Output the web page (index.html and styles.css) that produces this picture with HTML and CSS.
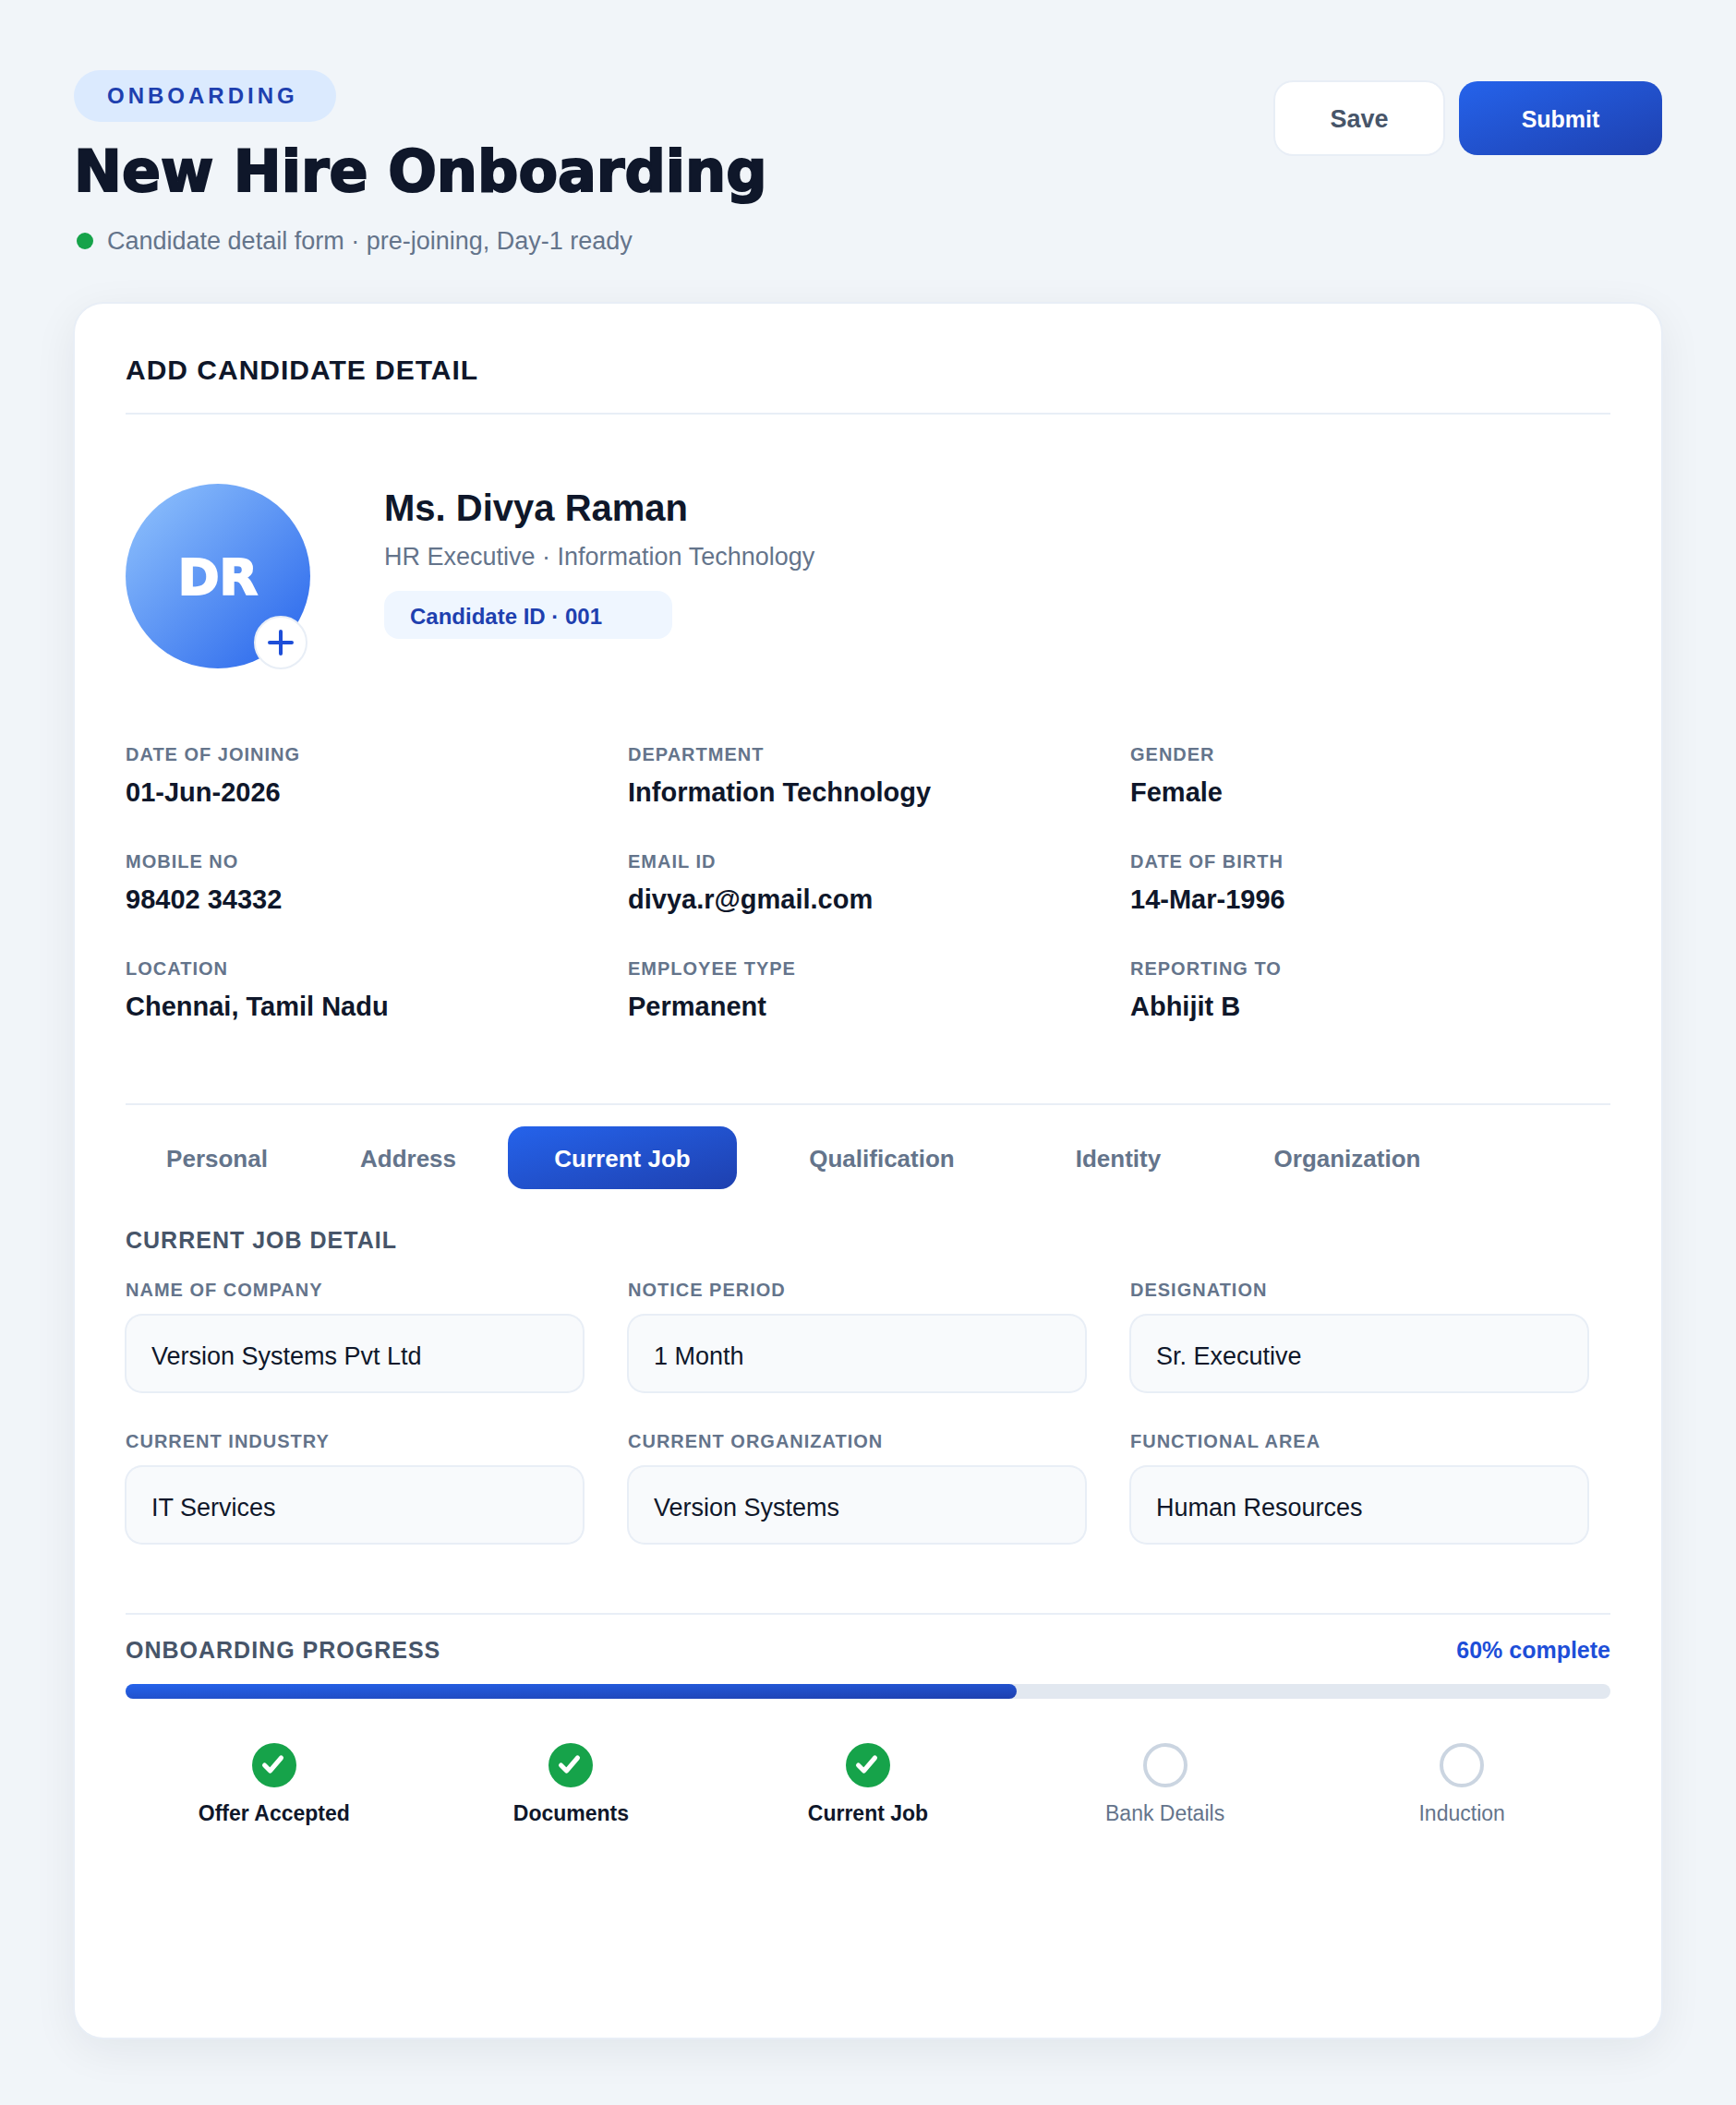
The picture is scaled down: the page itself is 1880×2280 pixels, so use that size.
FILE: index.html
```html
<!DOCTYPE html>
<html lang="en">
<head>
    <meta charset="UTF-8">
    <meta name="viewport" content="width=device-width, initial-scale=1.0">
    <title>New Hire Onboarding</title>
    <link rel="stylesheet" href="styles.css">
</head>
<body>
    <header class="page-header">
        <div>
            <span class="badge">ONBOARDING</span>
            <h1>New Hire Onboarding</h1>
            <p class="subtitle"><span class="dot"></span>Candidate detail form · pre-joining, Day-1 ready</p>
        </div>
        <div class="actions">
            <button type="button" class="btn btn-save">Save</button>
            <button type="submit" form="jobForm" class="btn btn-submit">Submit</button>
        </div>
    </header>

    <main class="card">
        <h2 class="card-title">ADD CANDIDATE DETAIL</h2>

        <section class="profile">
            <div class="avatar">
                DR
                <button type="button" class="avatar-add" aria-label="Add photo">
                    <svg width="32" height="32" viewBox="0 0 32 32">
                        <path d="M16 4v24M4 16h24" stroke="#1d4ed8" stroke-width="4" stroke-linecap="round"/>
                    </svg>
                </button>
            </div>
            <div>
                <h3 class="name">Ms. Divya Raman</h3>
                <p class="role">HR Executive · Information Technology</p>
                <span class="chip">Candidate ID · 001</span>
            </div>
        </section>

        <dl class="details">
            <div><dt>DATE OF JOINING</dt><dd>01-Jun-2026</dd></div>
            <div><dt>DEPARTMENT</dt><dd>Information Technology</dd></div>
            <div><dt>GENDER</dt><dd>Female</dd></div>
            <div><dt>MOBILE NO</dt><dd>98402 34332</dd></div>
            <div><dt>EMAIL ID</dt><dd>divya.r@gmail.com</dd></div>
            <div><dt>DATE OF BIRTH</dt><dd>14-Mar-1996</dd></div>
            <div><dt>LOCATION</dt><dd>Chennai, Tamil Nadu</dd></div>
            <div><dt>EMPLOYEE TYPE</dt><dd>Permanent</dd></div>
            <div><dt>REPORTING TO</dt><dd>Abhijit B</dd></div>
        </dl>

        <nav class="tabs">
            <button type="button" class="tab">Personal</button>
            <button type="button" class="tab">Address</button>
            <button type="button" class="tab tab-md active">Current Job</button>
            <button type="button" class="tab tab-xl">Qualification</button>
            <button type="button" class="tab">Identity</button>
            <button type="button" class="tab tab-lg">Organization</button>
        </nav>

        <form id="jobForm">
            <h3 class="section-title">CURRENT JOB DETAIL</h3>
            <div class="fields">
                <div class="field">
                    <label for="company">NAME OF COMPANY</label>
                    <input type="text" id="company" value="Version Systems Pvt Ltd">
                </div>
                <div class="field">
                    <label for="notice">NOTICE PERIOD</label>
                    <input type="text" id="notice" value="1 Month">
                </div>
                <div class="field">
                    <label for="designation">DESIGNATION</label>
                    <input type="text" id="designation" value="Sr. Executive">
                </div>
                <div class="field">
                    <label for="industry">CURRENT INDUSTRY</label>
                    <input type="text" id="industry" value="IT Services">
                </div>
                <div class="field">
                    <label for="organization">CURRENT ORGANIZATION</label>
                    <input type="text" id="organization" value="Version Systems">
                </div>
                <div class="field">
                    <label for="area">FUNCTIONAL AREA</label>
                    <input type="text" id="area" value="Human Resources">
                </div>
            </div>
        </form>

        <section class="progress">
            <div class="progress-head">
                <h3 class="section-title">ONBOARDING PROGRESS</h3>
                <span class="percent">60% complete</span>
            </div>
            <div class="bar"><div class="bar-fill" style="width: 60%"></div></div>
            <ol class="steps">
                <li class="step done">
                    <svg width="48" height="48" viewBox="0 0 48 48"><circle cx="24" cy="24" r="24" fill="#16a34a"/><path d="M13.5 24l6 6 12-14" class="tick"/></svg>
                    Offer Accepted
                </li>
                <li class="step done">
                    <svg width="48" height="48" viewBox="0 0 48 48"><circle cx="24" cy="24" r="24" fill="#16a34a"/><path d="M13.5 24l6 6 12-14" class="tick"/></svg>
                    Documents
                </li>
                <li class="step done">
                    <svg width="48" height="48" viewBox="0 0 48 48"><circle cx="24" cy="24" r="24" fill="#16a34a"/><path d="M13.5 24l6 6 12-14" class="tick"/></svg>
                    Current Job
                </li>
                <li class="step">
                    <svg width="48" height="48" viewBox="0 0 48 48"><circle cx="24" cy="24" r="22" fill="#fff" stroke="#cbd5e1" stroke-width="4"/></svg>
                    Bank Details
                </li>
                <li class="step">
                    <svg width="48" height="48" viewBox="0 0 48 48"><circle cx="24" cy="24" r="22" fill="#fff" stroke="#cbd5e1" stroke-width="4"/></svg>
                    Induction
                </li>
            </ol>
        </section>
    </main>
</body>
</html>
```
FILE: styles.css
```css
* {
    box-sizing: border-box;
}
body {
    margin: 0;
    padding: 76px 80px 72px;
    font-family: "Liberation Sans", Arial, sans-serif;
    color: #0f172a;
    background: #f1f5f9;
}
h1, h2, h3, p, dl, dd, ol {
    margin: 0;
    padding: 0;
}
button, input {
    font-family: inherit;
}
.page-header {
    display: flex;
    justify-content: space-between;
    align-items: flex-start;
    margin-bottom: 51px;
}
.badge {
    display: block;
    width: fit-content;
    min-width: 284px;
    padding: 0 36px;
    line-height: 56px;
    border-radius: 28px;
    background: #dbeafe;
    color: #1e40af;
    font-size: 24px;
    font-weight: bold;
    letter-spacing: 4px;
}
h1 {
    margin-top: 16px;
    font-family: "Arial Black", "DejaVu Sans", sans-serif;
    font-size: 62px;
    font-weight: 900;
    line-height: 76px;
    -webkit-text-stroke: 2px #0f172a;
}
.subtitle {
    display: flex;
    align-items: center;
    margin-top: 21px;
    color: #64748b;
    font-size: 27px;
    line-height: 32px;
}
.dot {
    width: 18px;
    height: 18px;
    margin: 0 15px 0 3px;
    border-radius: 50%;
    background: #16a34a;
}
.actions {
    display: flex;
    gap: 16px;
    padding-top: 12px;
}
.btn {
    width: 184px;
    height: 80px;
    padding: 2px 0 0;
    border: none;
    border-radius: 20px;
    font-weight: bold;
    cursor: pointer;
}
.btn-save {
    border: 1px solid #e8eef6;
    box-shadow: 0 0 0 1px #e8eef6;
    background: #fff;
    color: #475569;
    font-size: 27px;
}
.btn-submit {
    width: 220px;
    background: linear-gradient(to bottom right, #2563eb, #1e40af);
    color: #fff;
    font-size: 25px;
}
.card {
    padding: 55px 55px 229px;
    border: 1px solid #e8eef6;
    border-radius: 32px;
    background: #fff;
    box-shadow: 0 0 0 1px #e8eef6, 0 12px 48px rgba(15, 23, 42, 0.07);
}
.card-title {
    padding-bottom: 29px;
    border-bottom: 2px solid #e8eef6;
    font-size: 30px;
    line-height: 34px;
    letter-spacing: 1px;
}
.profile {
    display: flex;
    gap: 80px;
    margin-top: 75px;
}
.avatar {
    position: relative;
    width: 200px;
    height: 200px;
    border-radius: 50%;
    background: linear-gradient(135deg, #93c5fd, #2563eb);
    color: #fff;
    font-family: "DejaVu Sans", sans-serif;
    font-size: 54px;
    font-weight: 900;
    line-height: 204px;
    text-align: center;
    -webkit-text-stroke: 2px #fff;
}
.avatar-add {
    position: absolute;
    right: 3px;
    bottom: -1px;
    display: flex;
    align-items: center;
    justify-content: center;
    width: 58px;
    height: 58px;
    padding: 0;
    border: 2px solid #e8eef6;
    border-radius: 50%;
    background: #fff;
    cursor: pointer;
}
.name {
    font-size: 40px;
    line-height: 52px;
}
.role {
    margin-top: 11px;
    color: #64748b;
    font-size: 27px;
    line-height: 32px;
}
.chip {
    display: block;
    width: 312px;
    height: 52px;
    margin-top: 21px;
    padding: 4px 28px 0;
    line-height: 48px;
    border-radius: 16px;
    background: #eff6ff;
    color: #1e40af;
    font-size: 24px;
    font-weight: bold;
}
.details, .fields {
    display: grid;
    grid-template-columns: repeat(3, 1fr);
    column-gap: 48px;
    margin-right: 24px;
}
.details {
    row-gap: 45px;
    margin-top: 80px;
}
dt, label {
    display: block;
    color: #64748b;
    font-size: 20px;
    font-weight: bold;
    line-height: 26px;
    letter-spacing: 1px;
}
dd {
    margin-top: 11px;
    font-size: 29px;
    font-weight: bold;
    line-height: 34px;
}
.tabs {
    display: flex;
    gap: 9px;
    margin-top: 88px;
    padding-top: 23px;
    border-top: 2px solid #e8eef6;
}
.tab {
    width: 198px;
    height: 68px;
    padding: 2px 0 0;
    border: none;
    border-radius: 18px;
    background: none;
    color: #64748b;
    font-size: 26px;
    font-weight: bold;
    cursor: pointer;
}
.tab-md {
    width: 248px;
}
.tab-lg {
    width: 280px;
}
.tab-xl {
    width: 296px;
}
.tab.active {
    background: linear-gradient(to bottom right, #2563eb, #1e40af);
    color: #fff;
}
.section-title {
    color: #475569;
    font-size: 25px;
    line-height: 30px;
    letter-spacing: 1px;
}
form .section-title {
    margin: 40px 0 26px;
}
.fields {
    row-gap: 40px;
}
.field input {
    width: 100%;
    height: 84px;
    margin-top: 14px;
    padding: 6px 27px 0;
    border: 1px solid #e8eef6;
    border-radius: 18px;
    box-shadow: 0 0 0 1px #e8eef6;
    background: #f8fafc;
    color: #0f172a;
    font-size: 27px;
}
.progress {
    margin-top: 75px;
    padding-top: 23px;
    border-top: 2px solid #e8eef6;
}
.progress-head {
    display: flex;
    justify-content: space-between;
}
.percent {
    color: #1d4ed8;
    font-size: 25px;
    font-weight: bold;
    line-height: 30px;
}
.bar {
    height: 16px;
    margin-top: 22px;
    border-radius: 8px;
    background: #e2e8f0;
}
.bar-fill {
    height: 100%;
    border-radius: 8px;
    background: linear-gradient(to bottom right, #2563eb, #1e40af);
}
.steps {
    display: flex;
    margin-top: 48px;
    list-style: none;
}
.step {
    flex: 1;
    display: flex;
    flex-direction: column;
    align-items: center;
    gap: 14px;
    color: #64748b;
    font-size: 23px;
    line-height: 28px;
}
.step.done {
    color: #0f172a;
    font-weight: bold;
}
.tick {
    fill: none;
    stroke: #fff;
    stroke-width: 5;
    stroke-linecap: round;
    stroke-linejoin: round;
}
```
